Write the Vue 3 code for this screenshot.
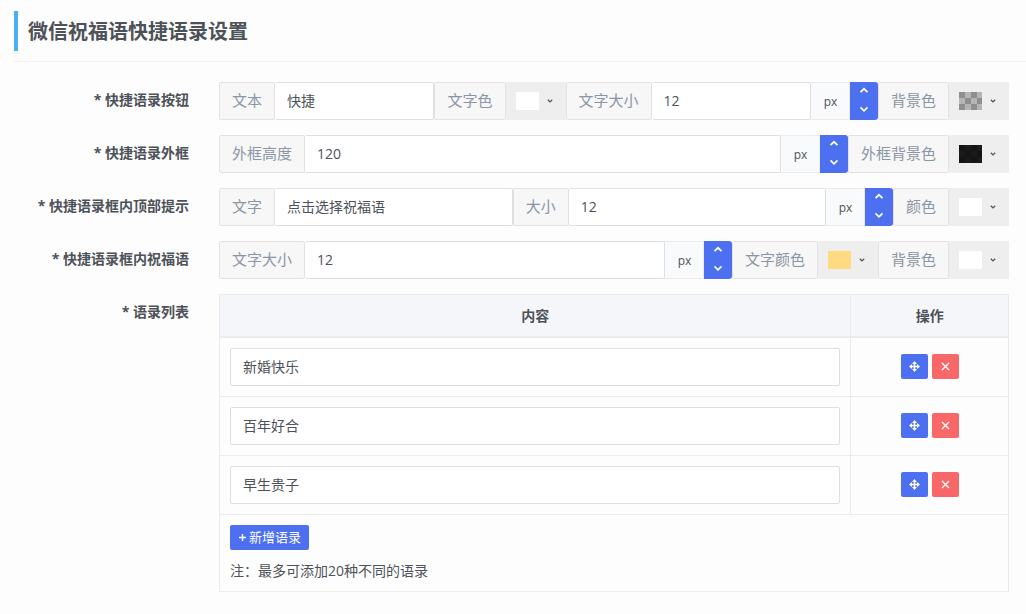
<script setup>
import { reactive } from 'vue'

const rows = reactive([
  {
    label: '快捷语录按钮',
    parts: [
      { kind: 'field', id: 'btn-text', label: '文本', value: '快捷' },
      { kind: 'color', label: '文字色', tone: 'white' },
      { kind: 'field', id: 'btn-size', label: '文字大小', value: '12', unit: 'px' },
      { kind: 'color', label: '背景色', tone: 'clear' }
    ]
  },
  {
    label: '快捷语录外框',
    parts: [
      { kind: 'field', id: 'box-height', label: '外框高度', value: '120', unit: 'px' },
      { kind: 'color', label: '外框背景色', tone: 'dark' }
    ]
  },
  {
    label: '快捷语录框内顶部提示',
    parts: [
      { kind: 'field', id: 'tip-text', label: '文字', value: '点击选择祝福语', narrow: true },
      { kind: 'field', id: 'tip-size', label: '大小', value: '12', unit: 'px' },
      { kind: 'color', label: '颜色', tone: 'white' }
    ]
  },
  {
    label: '快捷语录框内祝福语',
    parts: [
      { kind: 'field', id: 'wish-size', label: '文字大小', value: '12', unit: 'px' },
      { kind: 'color', label: '文字颜色', tone: 'gold' },
      { kind: 'color', label: '背景色', tone: 'white' }
    ]
  }
])

const phrases = reactive([{ text: '新婚快乐' }, { text: '百年好合' }, { text: '早生贵子' }])

function step(part, delta) {
  part.value = String(Number(part.value) + delta)
}
function addPhrase() {
  if (phrases.length < 20) phrases.push({ text: '' })
}
</script>

<template>
  <main class="page">
    <header class="head">
      <h1>微信祝福语快捷语录设置</h1>
    </header>

    <form class="form" @submit.prevent>
      <div v-for="row in rows" :key="row.label" class="row" role="group" :aria-label="row.label">
        <div class="row-label">* {{ row.label }}</div>
        <div class="group">
          <template v-for="part in row.parts" :key="part.label">
            <template v-if="part.kind === 'field'">
              <label class="addon" :for="part.id">{{ part.label }}</label>
              <input :id="part.id" v-model="part.value" class="input" :class="{ narrow: part.narrow }" type="text" />
              <template v-if="part.unit">
                <span class="unit">{{ part.unit }}</span>
                <span class="stepper">
                  <button type="button" aria-label="增加" @click="step(part, 1)">
                    <svg width="10" height="7" viewBox="0 0 10 7"><path d="M1.5 5.2 5 1.8l3.5 3.4" /></svg>
                  </button>
                  <button type="button" aria-label="减少" @click="step(part, -1)">
                    <svg width="10" height="7" viewBox="0 0 10 7"><path d="M1.5 1.4 5 4.8l3.5-3.4" /></svg>
                  </button>
                </span>
              </template>
            </template>
            <template v-else>
              <span class="addon">{{ part.label }}</span>
              <button type="button" class="picker" :aria-label="part.label">
                <span class="swatch" :class="part.tone"></span>
                <svg width="6" height="4" viewBox="0 0 6 4"><path d="M.8.8 3 2.9 5.2.8" /></svg>
              </button>
            </template>
          </template>
        </div>
      </div>

      <div class="row">
        <div class="row-label">* 语录列表</div>
        <table class="table">
          <thead>
            <tr>
              <th>内容</th>
              <th class="actions">操作</th>
            </tr>
          </thead>
          <tbody>
            <tr v-for="(phrase, i) in phrases" :key="i">
              <td><input v-model="phrase.text" class="input phrase" type="text" :aria-label="'语录' + (i + 1)" /></td>
              <td>
                <div class="tools">
                  <button type="button" class="tool move" aria-label="移动">
                    <svg width="11" height="11" viewBox="0 0 11 11">
                      <path class="shaft" d="M5.5 2v7M2 5.5h7" />
                      <path class="tip" d="M5.5 0 8 3H3zM5.5 11 3 8h5zM0 5.5 3 3v5zM11 5.5 8 8V3z" />
                    </svg>
                  </button>
                  <button type="button" class="tool remove" aria-label="删除" @click="phrases.splice(i, 1)">
                    <svg width="9" height="9" viewBox="0 0 9 9"><path class="line" d="M1 1l7 7M8 1 1 8" /></svg>
                  </button>
                </div>
              </td>
            </tr>
          </tbody>
          <tfoot>
            <tr>
              <td colspan="2">
                <button type="button" class="add" @click="addPhrase">
                  <svg width="9" height="9" viewBox="0 0 9 9"><path class="line" d="M4.5 1v7M1 4.5h7" /></svg>新增语录
                </button>
                <p class="note">注：最多可添加20种不同的语录</p>
              </td>
            </tr>
          </tfoot>
        </table>
      </div>
    </form>
  </main>
</template>

<style>
html {
  background: #fdfdfd;
}
</style>

<style scoped>
.page {
  padding: 11px 0 22px 14px;
  font-family: "Open Sans", "Noto Sans CJK SC", sans-serif;
  font-size: 14px;
  line-height: 20px;
  color: #4d5259;
}
.page *,
.page *::before {
  box-sizing: border-box;
}
button,
input {
  margin: 0;
  font: inherit;
}
button {
  padding: 0;
  border: 0;
  cursor: pointer;
}
.head {
  padding-bottom: 10px;
  border-bottom: 1px solid #f1f2f3;
}
h1 {
  margin: 0;
  padding: 2px 0 0 10px;
  border-left: 4px solid #48b0f7;
  font-size: 20px;
  line-height: 38px;
  font-weight: 700;
}
.form {
  display: flex;
  flex-direction: column;
  gap: 15px;
  padding: 20px 17px 0 0;
}
.row {
  display: grid;
  grid-template-columns: 175px minmax(0, 1fr);
  column-gap: 30px;
}
.row-label {
  padding-top: 8px;
  font-weight: 700;
  text-align: right;
  white-space: nowrap;
}
.group {
  display: flex;
  height: 38px;
}
.addon {
  flex: none;
  padding: 0 12px;
  border: 1px solid #e8dfe2;
  border-radius: 2px;
  background: #f7f7f7;
  color: #8b95a5;
  font-size: 15px;
  line-height: 34px;
}
.input {
  flex: 12 1 0;
  min-width: 0;
  height: 38px;
  padding: 0 12px 2px;
  border: 1px solid #dcdfe6;
  border-radius: 2px;
  background: #fff;
  color: #4d5259;
  outline: 0;
}
.group .input {
  border-left-width: 0;
}
.narrow {
  flex-grow: 11;
}
.unit {
  flex: none;
  width: 39px;
  padding: 2px 0 0 1px;
  border: 1px solid #ebebeb;
  border-left-width: 0;
  background: #f9fafb;
  font-size: 12px;
  line-height: 34px;
  text-align: center;
}
.stepper {
  display: flex;
  flex: none;
  flex-direction: column;
  width: 28px;
  border-radius: 0 3px 3px 0;
  overflow: hidden;
}
.stepper button {
  display: flex;
  flex: 1;
  align-items: center;
  justify-content: center;
  padding-bottom: 2px;
  background: #4d70f0;
}
svg {
  display: block;
  fill: none;
  stroke: #fff;
}
.stepper svg {
  stroke-width: 1.7;
}
.picker {
  display: flex;
  flex: none;
  align-items: center;
  gap: 8px;
  width: 60px;
  padding-left: 10px;
  background: #eee;
}
.picker svg {
  stroke: #555;
  stroke-width: 1.3;
}
.swatch {
  width: 23px;
  height: 18px;
}
.white {
  background: #fff;
}
.gold {
  background: #ffda80;
}
.clear {
  background: conic-gradient(#b5b5b5 25%, #8f8f8f 0 50%, #b5b5b5 0 75%, #8f8f8f 0) 0 0 / 12px 12px;
}
.dark {
  background: conic-gradient(#1a1a1a 25%, #141414 0 50%, #1a1a1a 0 75%, #141414 0) 0 0 / 12px 12px;
}
.table {
  width: 100%;
  border: 1px solid #ebebeb;
  border-spacing: 0;
  border-collapse: separate;
  table-layout: fixed;
}
.table th {
  height: 43px;
  padding: 0;
  border-bottom: 2px solid #ebebeb;
  background: #f5f6fa;
  font-weight: 700;
}
.table .actions {
  width: 20%;
}
.table th + th,
.table td + td {
  border-left: 1px solid #ebebeb;
}
.table td {
  padding: 10px;
}
.table tbody td {
  border-bottom: 1px solid #ebebeb;
}
.phrase {
  display: block;
  width: 100%;
}
.tools {
  display: flex;
  justify-content: center;
  gap: 4px;
  padding-bottom: 2px;
}
.tool {
  display: flex;
  align-items: center;
  justify-content: center;
  width: 27px;
  height: 25px;
  border-radius: 2px;
}
.move,
.add {
  background: #4d70f0;
}
.remove {
  background: #f96868;
}
.line {
  stroke-width: 1.4;
}
.shaft {
  stroke-width: 1.6;
}
.tip {
  fill: #fff;
  stroke: none;
}
.add {
  display: flex;
  align-items: center;
  gap: 2px;
  height: 25px;
  padding: 0 8px;
  border-radius: 2px;
  color: #fff;
  font-size: 13px;
  line-height: 25px;
}
.note {
  margin: 11px 0 0;
}
</style>
